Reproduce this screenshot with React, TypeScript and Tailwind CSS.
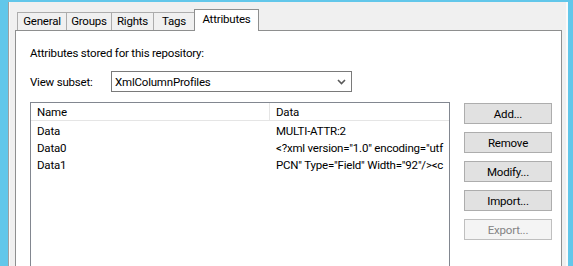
import React from "react";

const font = { fontFamily: 'Roboto, "Noto Sans", sans-serif' };

function Btn({ label, disabled }: { label: string; disabled?: boolean }) {
  return (
    <div
      className={
        "flex h-[21px] w-[88px] items-center justify-center border leading-[16px] " +
        (disabled
          ? "border-[#bfbfbf] bg-[#f4f4f4] text-[#838383]"
          : "border-[#adadad] bg-[#e1e1e1] text-black")
      }
    >
      {label}
    </div>
  );
}

const rows: [string, string][] = [
  ["Data", "MULTI-ATTR:2"],
  ["Data0", '<?xml version="1.0" encoding="utf'],
  ["Data1", 'PCN" Type="Field" Width="92"/><c'],
];

const tabCls =
  "-ml-px flex h-[18px] items-start justify-center border border-b-0 border-[#acacac] bg-[#f0f0f0] pt-[1px] leading-[15px]";

export default function App() {
  return (
    <div
      className="flex h-[266px] w-[573px] overflow-hidden bg-[#62c7ea] text-[11.5px] tracking-[-0.2px] text-black"
      style={font}
    >
      <div className="w-[8px] shrink-0 bg-[#62c7ea]" />
      <div className="mt-[2px] flex flex-1 border-l border-[#a0a0a0] bg-[#f0f0f0]">
        <div className="flex flex-1 flex-col border-l border-[#fbfbfb] pl-[5px] pr-[4px] pt-[7px]">
          {/* tabs */}
          <div className="flex items-end pl-[3px]">
            <div className={tabCls + " w-[50px]"}>General</div>
            <div className={tabCls + " w-[46px]"}>Groups</div>
            <div className={tabCls + " w-[43px]"}>Rights</div>
            <div className={tabCls + " w-[42px]"}>Tags</div>
            <div className="relative z-10 -mb-px -ml-px flex h-[22px] w-[65px] items-start justify-center border border-b-0 border-[#8e8f8f] bg-white pt-[2px] leading-[15px]">
              Attributes
            </div>
          </div>
          {/* panel */}
          <div className="flex flex-1 flex-col border border-b-0 border-[#8e8f8f] bg-white pl-[14px] pr-[8px] pt-[14px] leading-[16px]">
            <div>Attributes stored for this repository:</div>
            <div className="mt-[10px] flex items-center">
              <div className="w-[81px]">View subset:</div>
              <div className="flex h-[21px] w-[241px] items-center justify-between border border-[#7a7a7a] bg-white pl-[3px] pr-[5px]">
                <span>XmlColumnProfiles</span>
                <svg width="9" height="6" viewBox="0 0 9 6">
                  <path d="M1 1 L4.5 4.5 L8 1" stroke="#5a5a5a" strokeWidth="1.6" fill="none" />
                </svg>
              </div>
            </div>
            <div className="mt-[10px] flex flex-1 gap-[14px]">
              {/* list */}
              <div className="flex h-full w-[420px] flex-col overflow-hidden border border-b-0 border-[#828790] bg-white">
                <div className="flex h-[18px] shrink-0 border-b border-[#e5e5e5]">
                  <div className="w-[239px] border-r border-[#e5e5e5] pl-[6px] leading-[18px]">Name</div>
                  <div className="flex-1 whitespace-nowrap pl-[6px] leading-[18px]">Data</div>
                </div>
                <div className="pt-[1px]">
                  {rows.map(([n, d]) => (
                    <div key={n} className="flex h-[17px] items-center whitespace-nowrap">
                      <div className="w-[239px] shrink-0 pl-[6px]">{n}</div>
                      <div className="min-w-0 flex-1 overflow-hidden pl-[6px]">{d}</div>
                    </div>
                  ))}
                </div>
              </div>
              {/* buttons */}
              <div className="flex flex-col gap-[8px] pt-[1px]">
                <Btn label="Add..." />
                <Btn label="Remove" />
                <Btn label="Modify..." />
                <Btn label="Import..." />
                <Btn label="Export..." disabled />
              </div>
            </div>
          </div>
        </div>
        <div className="w-[2px] shrink-0 bg-[#fbfbfb]" />
      </div>
      <div className="w-[5px] shrink-0 bg-[#62c7ea]" />
    </div>
  );
}
